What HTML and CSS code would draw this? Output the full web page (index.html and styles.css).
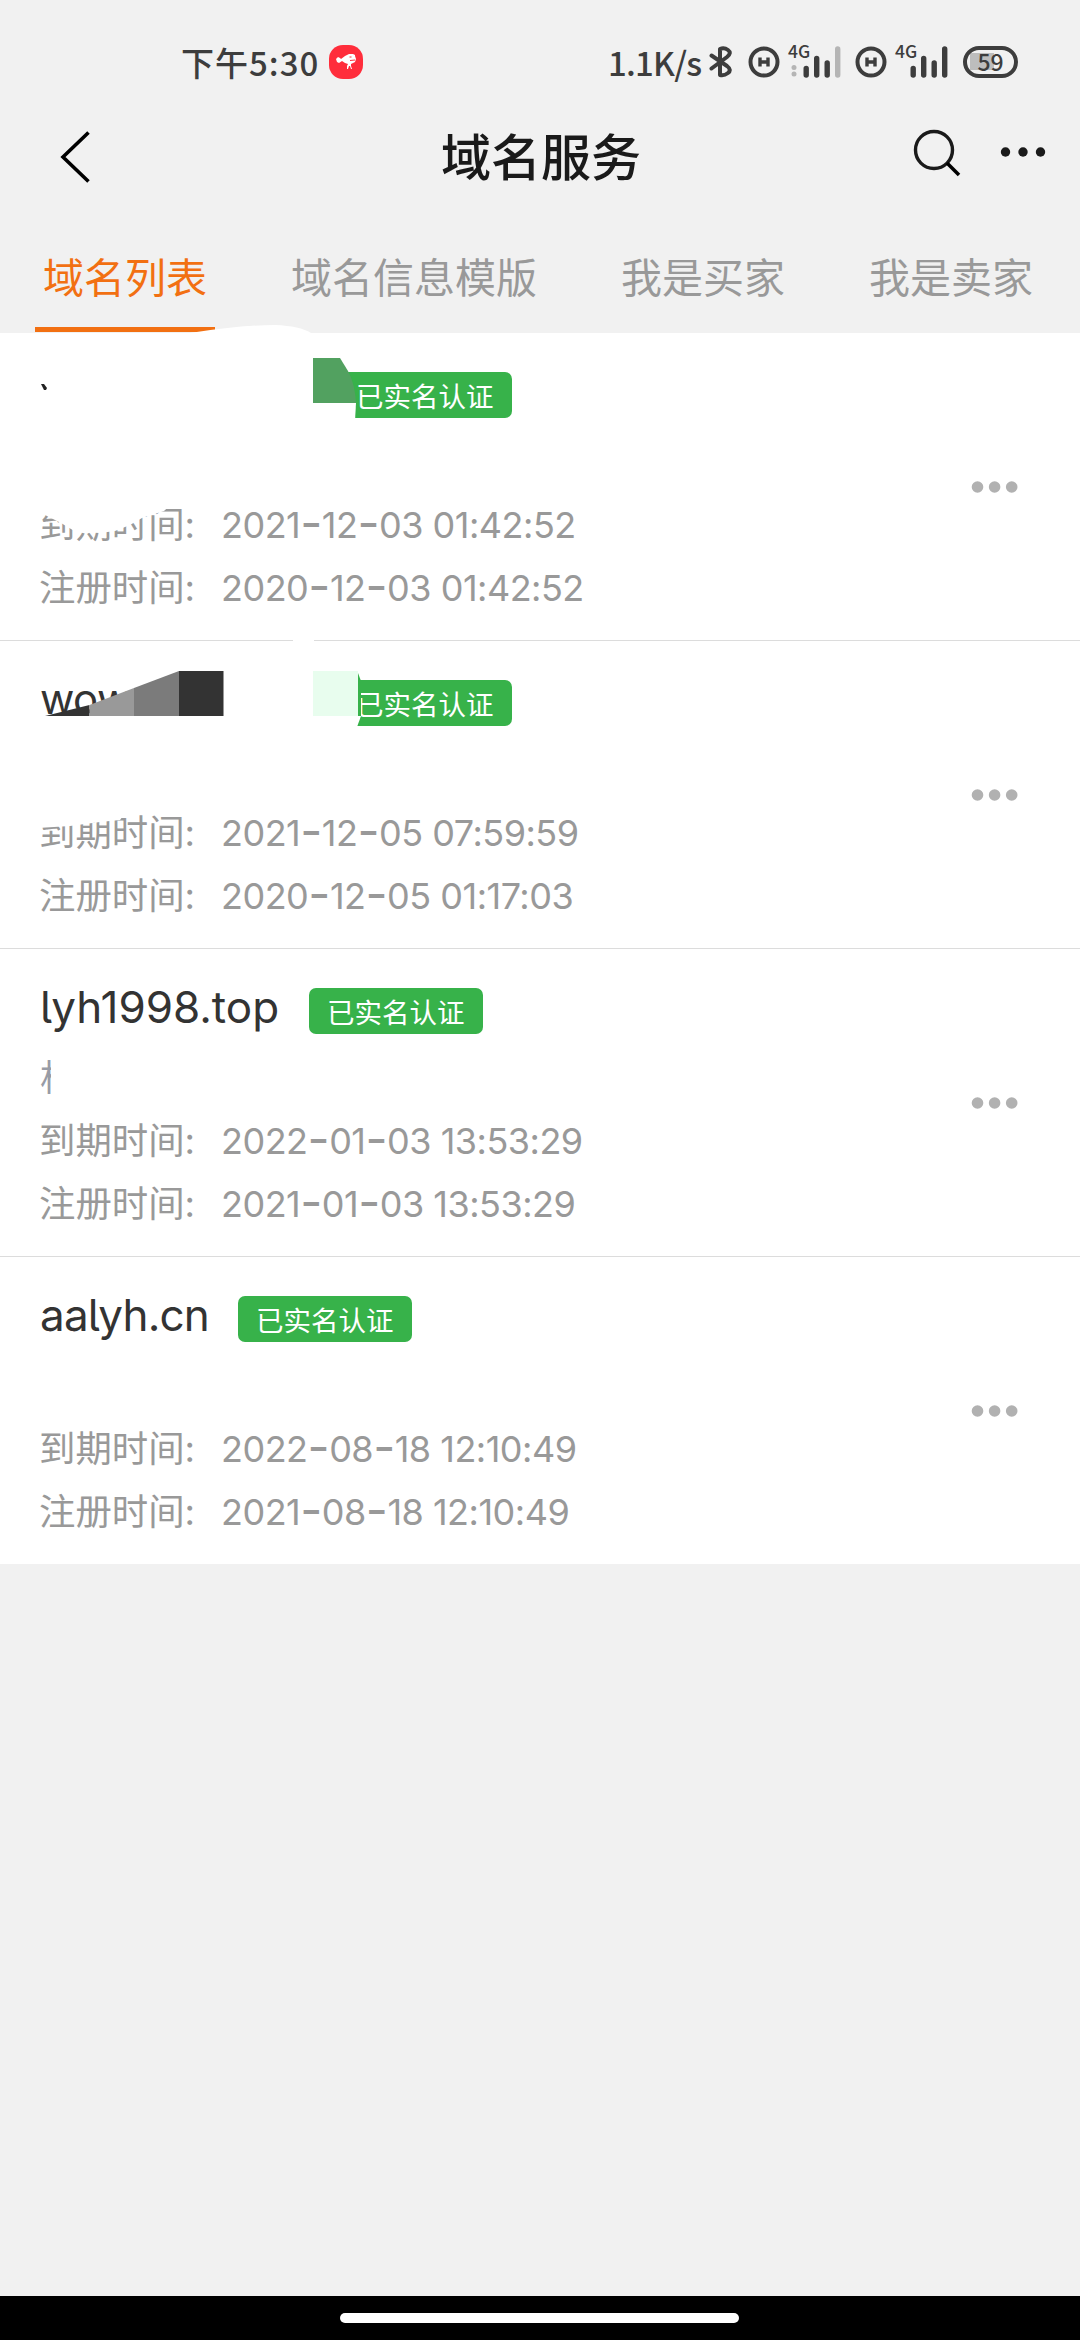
FILE: index.html
```
<!DOCTYPE html>
<html lang="zh-CN">
<head>
    <meta charset="UTF-8">
    <meta name="viewport" content="width=device-width, initial-scale=1.0">
    <title>域名服务</title>
    <link rel="stylesheet" href="styles.css">
</head>
<body>
    <div class="status-bar">
        <span class="time">下午5:30</span>
        <svg class="app-icon" width="34" height="34" viewBox="0 0 34 34">
            <rect width="34" height="34" rx="14" fill="#ff2d3b"/>
            <path d="M7 14l2-2 2 1 1 1 4-3 4-2 4 0 2 1v1l1 3-1 3-4 2 0 2 1 3-1 0-1-3-1 0-1 3h-1l0-3 1-2-3-1-3-2-3 2-2-1z" fill="#fff"/>
            <path d="M20.500 12h2M21 15.500l5-.5" stroke="#ff2d3b" stroke-width="1"/>
        </svg>
        <span class="speed">1.1K/s</span>
        <svg class="bluetooth" width="24" height="32" viewBox="0 0 24 32">
            <path d="M2.500 9.500L18 20q5 4 1 7q-4 3 -8 2V3q4 -2 8 1q4 3 -1 7L2.500 22.500" fill="none" stroke="#3d3d3d" stroke-width="4" stroke-linecap="round" stroke-linejoin="round"/>
        </svg>
        <svg class="hd" width="32" height="32" viewBox="0 0 32 32">
            <circle cx="16" cy="16" r="13.500" fill="none" stroke="#3d3d3d" stroke-width="4"/>
            <path d="M12 11.500v9M20 11.500v9M12 16h8" stroke="#3d3d3d" stroke-width="3.400"/>
        </svg>
        <div class="signal">
            <span>4G</span>
            <svg width="54" height="32" viewBox="0 0 54 32">
                <circle cx="6" cy="21.500" r="2.500" fill="#b5b5b5"/>
                <circle cx="6" cy="28" r="2.500" fill="#b5b5b5"/>
                <path d="M18.200 22.500v6.500M28.700 12.500v16.500M39.200 17v12" stroke="#3d3d3d" stroke-width="5.400" stroke-linecap="round"/>
                <path d="M49.700 3v26" stroke="#b5b5b5" stroke-width="5.400" stroke-linecap="round"/>
            </svg>
        </div>
        <svg class="hd hd2" width="32" height="32" viewBox="0 0 32 32">
            <circle cx="16" cy="16" r="13.500" fill="none" stroke="#3d3d3d" stroke-width="4"/>
            <path d="M12 11.500v9M20 11.500v9M12 16h8" stroke="#3d3d3d" stroke-width="3.400"/>
        </svg>
        <div class="signal">
            <span>4G</span>
            <svg width="54" height="32" viewBox="0 0 54 32">
                <path d="M18.200 22.500v6.500M28.700 12.500v16.500M39.200 17v12M49.700 3v26" stroke="#3d3d3d" stroke-width="5.400" stroke-linecap="round"/>
            </svg>
        </div>
        <div class="battery"><span>59</span></div>
    </div>

    <div class="header">
        <svg class="back" width="32" height="54" viewBox="0 0 32 54">
            <path d="M28.500 2.500L3 27l25.500 24.500" fill="none" stroke="#000" stroke-width="3.600"/>
        </svg>
        <h1>域名服务</h1>
        <svg class="search" width="48" height="48" viewBox="0 0 48 48">
            <circle cx="21" cy="21" r="18.500" fill="none" stroke="#1a1a1a" stroke-width="3.400"/>
            <path d="M34 34l12 12" stroke="#000" stroke-width="3.600"/>
        </svg>
        <svg class="more" width="46" height="12" viewBox="0 0 46 12">
            <g fill="#1a1a1a"><circle cx="5.500" cy="6" r="4.700"/><circle cx="23" cy="6" r="4.700"/><circle cx="40.500" cy="6" r="4.700"/></g>
        </svg>
    </div>

    <div class="tabs">
        <span class="tab active">域名列表</span>
        <span class="tab">域名信息模版</span>
        <span class="tab">我是买家</span>
        <span class="tab">我是卖家</span>
    </div>

    <div class="list">
        <div class="card">
            <div class="name-row indent">
                <span class="badge">已实名认证</span>
            </div>
            <div class="remark"></div>
            <div class="row"><span class="label">到期时间:</span><span class="date">2021<i>-</i>12<i>-</i>03 01:42:52</span></div>
            <div class="row"><span class="label">注册时间:</span><span class="date">2020<i>-</i>12<i>-</i>03 01:42:52</span></div>
            <svg class="menu" width="50" height="14" viewBox="0 0 50 14"><g fill="#b1b1b1"><circle cx="7.500" cy="7" r="5.800"/><circle cx="24.600" cy="7" r="5.800"/><circle cx="41.700" cy="7" r="5.800"/></g></svg>
            <svg class="smudge" width="1080" height="308" viewBox="0 0 1080 308">
                <path d="M190 0Q240-8 275-8Q300-7 311 0z" fill="#fff"/>
                <path d="M41 51h3l3 4-1 2h-2z" fill="#222"/>
                <path d="M330 30h10q12 20 15 40l0 20h-1v-5h-24z" fill="#fff"/>
                <path d="M313 70h43l-1 18h-42z" fill="#fff"/>
                <path d="M313 25h27l8 13q7 13 8 32h-43z" fill="#52a160"/>
                <path d="M38 165h140l-14 13-22 7-12 7-15 6-15 2-24-1-15-9-20-10-3-2z" fill="#fff"/>
                <path d="M293 306h21v3h-21z" fill="#fff"/>
            </svg>
        </div>
        <div class="card">
            <div class="name-row indent">
                <span class="name wow">wow</span>
                <span class="badge">已实名认证</span>
            </div>
            <div class="remark"></div>
            <div class="row"><span class="label">到期时间:</span><span class="date">2021<i>-</i>12<i>-</i>05 07:59:59</span></div>
            <div class="row"><span class="label">注册时间:</span><span class="date">2020<i>-</i>12<i>-</i>05 01:17:03</span></div>
            <svg class="menu" width="50" height="14" viewBox="0 0 50 14"><g fill="#b1b1b1"><circle cx="7.500" cy="7" r="5.800"/><circle cx="24.600" cy="7" r="5.800"/><circle cx="41.700" cy="7" r="5.800"/></g></svg>
            <svg class="smudge" width="1080" height="308" viewBox="0 0 1080 308">
                <path d="M45 75l44.500-11v11z" fill="#333"/>
                <path d="M89.500 64l44.500-17v28h-44.500z" fill="#999"/>
                <path d="M134 47l45-17v45h-45z" fill="#7b7b7b"/>
                <path d="M179 30h44.500v45H179z" fill="#333"/>
                <path d="M330 30h28l3 45-4 11h-27z" fill="#fff"/>
                <path d="M357 32l1 0 3 8v35h-4z" fill="#37b24a"/>
                <path d="M313 30h45v45h-45z" fill="#e8fdee"/>
                <path d="M38 168h90l-8 11-20 2-30 4-32 2z" fill="#fff"/>
            </svg>
        </div>
        <div class="card">
            <div class="name-row">
                <span class="name top">lyh1998.top</span>
                <span class="badge">已实名认证</span>
            </div>
            <div class="remark">相</div>
            <div class="row"><span class="label">到期时间:</span><span class="date">2022<i>-</i>01<i>-</i>03 13:53:29</span></div>
            <div class="row"><span class="label">注册时间:</span><span class="date">2021<i>-</i>01<i>-</i>03 13:53:29</span></div>
            <svg class="menu" width="50" height="14" viewBox="0 0 50 14"><g fill="#b1b1b1"><circle cx="7.500" cy="7" r="5.800"/><circle cx="24.600" cy="7" r="5.800"/><circle cx="41.700" cy="7" r="5.800"/></g></svg>
            <svg class="smudge" width="1080" height="308" viewBox="0 0 1080 308">
                <path d="M51 104h30v50H51z" fill="#fff"/>
            </svg>
        </div>
        <div class="card">
            <div class="name-row">
                <span class="name cn">aalyh.cn</span>
                <span class="badge">已实名认证</span>
            </div>
            <div class="remark"></div>
            <div class="row"><span class="label">到期时间:</span><span class="date">2022<i>-</i>08<i>-</i>18 12:10:49</span></div>
            <div class="row"><span class="label">注册时间:</span><span class="date">2021<i>-</i>08<i>-</i>18 12:10:49</span></div>
            <svg class="menu" width="50" height="14" viewBox="0 0 50 14"><g fill="#b1b1b1"><circle cx="7.500" cy="7" r="5.800"/><circle cx="24.600" cy="7" r="5.800"/><circle cx="41.700" cy="7" r="5.800"/></g></svg>
        </div>
    </div>

    <div class="nav-bar"><div class="pill"></div></div>
</body>
</html>
```
FILE: styles.css
```
* {
    box-sizing: border-box;
}
body {
    margin: 0;
    width: 1080px;
    height: 2340px;
    display: flex;
    flex-direction: column;
    background-color: #f1f1f1;
    font-family: Inter, "Noto Sans CJK SC", sans-serif;
    white-space: nowrap;
    overflow: hidden;
}
svg {
    display: block;
    flex: none;
}

/* status bar */
.status-bar {
    height: 124px;
    padding: 0 62px 0 181px;
    display: flex;
    align-items: center;
    color: #3d3d3d;
    font-family: "Noto Sans CJK SC", sans-serif;
    font-size: 33px;
    font-weight: 500;
}
.time {
    width: 148px;
    letter-spacing: 1px;
}
.speed {
    width: 101px;
    margin-left: 245px;
    letter-spacing: -0.8px;
}
.hd {
    margin-left: 15px;
}
.hd2 {
    margin-left: 13px;
}
.signal {
    position: relative;
    margin-left: 8px;
}
.signal span {
    position: absolute;
    left: 0;
    top: -3px;
    font-size: 17.500px;
    line-height: 16px;
}
.battery {
    width: 55px;
    height: 32px;
    margin-left: auto;
    border: 4.500px solid #3d3d3d;
    border-radius: 16px;
    background: radial-gradient(circle at 50% 50%, #bdbdbd 0, #bdbdbd 100%) 3px 3px / 24px 17px no-repeat;
    font-size: 23px;
    line-height: 23px;
    text-align: center;
}

/* title */
.header {
    height: 98px;
    padding: 0 34px 0 60px;
    display: flex;
}
.back {
    margin-top: 6px;
}
h1 {
    width: 200px;
    margin: 1px 0 0 349px;
    color: #1a1a1a;
    font-size: 50px;
    line-height: 66px;
    font-weight: 500;
}
.search {
    margin: 5px 0 0 272px;
}
.more {
    margin: 22px 0 0 39px;
}

/* tabs */
.tabs {
    height: 111px;
    padding: 0 35px;
    display: flex;
    gap: 68px;
    color: #999;
    font-size: 41px;
    line-height: 113px;
}
.tab {
    height: 110px;
    padding: 0 8px;
}
.tab.active {
    color: #f27012;
    border-bottom: 5px solid #f27012;
}

/* domain list */
.card {
    position: relative;
    height: 308px;
    padding: 39px 40px 0;
    background-color: #fff;
    border-bottom: 1px solid #dcdcdc;
}
.card:last-child {
    height: 307px;
    border-bottom: none;
}
.name-row {
    height: 46px;
    display: flex;
    align-items: center;
    gap: 30px;
}
.indent .badge {
    margin-left: auto;
}
.indent {
    width: 472px;
}
.name {
    height: 46px;
    color: #333;
    font-size: 44px;
    line-height: 38px;
    font-feature-settings: "cv05";
}
.wow {
    font-size: 42px;
    letter-spacing: -0.5px;
}
.top {
    width: 239px;
}
.cn {
    width: 168px;
    letter-spacing: -0.8px;
}
.badge {
    width: 174px;
    height: 46px;
    padding-left: 18px;
    border-radius: 7px;
    background-color: #37b24a;
    color: #fff;
    font-size: 27.500px;
    line-height: 51px;
}
.remark {
    height: 54px;
    margin-top: 17px;
    color: #989ca6;
    font-size: 36px;
    line-height: 54px;
}
.row {
    height: 63px;
    display: flex;
    color: #999;
    font-size: 36.400px;
    line-height: 63px;
}
.remark + .row {
    margin-top: 5px;
}
.label {
    width: 181px;
    margin-left: -1px;
}
.date {
    margin-left: 1px;
    font-size: 36px;
    letter-spacing: -0.5px;
}
.date i {
    font-size: 48px;
    font-style: normal;
    line-height: 0;
    vertical-align: -2px;
}
.menu {
    position: absolute;
    left: 970px;
    top: 147px;
}
.smudge {
    position: absolute;
    left: 0;
    top: 0;
    z-index: 1;
    overflow: visible;
}

/* gesture bar */
.nav-bar {
    height: 44px;
    margin-top: auto;
    padding: 17px 0 0 340px;
    background-color: #000;
}
.pill {
    width: 399px;
    height: 10px;
    border-radius: 5px;
    background-color: #fff;
}
```
